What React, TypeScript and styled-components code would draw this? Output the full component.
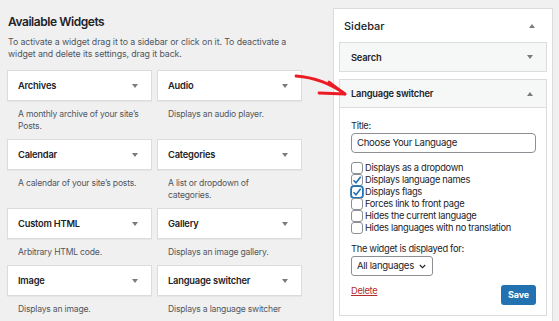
import React from 'react'
import styled, { createGlobalStyle } from 'styled-components'

const GlobalStyle = createGlobalStyle`
  html, body {
    margin: 0;
    padding: 0;
    background: #f0f0f1;
    font-family: Inter, "Noto Sans", sans-serif;
    color: #1d2327;
  }
  * { box-sizing: border-box; }
`

const Page = styled.div`
  position: relative;
  width: 559px;
  height: 321px;
  overflow: hidden;
  display: flex;
  padding: 0 6px 0 7px;
`

const LeftColumn = styled.div`
  width: 295px;
  padding-top: 14px;
`

const Heading = styled.h2`
  margin: 0;
  font-size: 12px;
  line-height: 16px;
  font-weight: 600;
  letter-spacing: -0.45px;
  padding-left: 1px;
`

const Intro = styled.p`
  margin: 6px 0 0 1px;
  font-size: 8.8px;
  line-height: 11.5px;
  letter-spacing: -0.1px;
  color: #50575e;
`

const WidgetGrid = styled.div`
  margin-top: 11px;
  display: grid;
  grid-template-columns: 145px 145px;
  column-gap: 5px;
`

const WidgetItem = styled.div``

const Card = styled.div`
  height: 31px;
  display: flex;
  align-items: center;
  justify-content: space-between;
  padding: 0 13px 0 10px;
  background: #fff;
  border: 1px solid #dcdcde;
  box-shadow: 0 1px 1px rgba(0, 0, 0, 0.04);
  font-size: 9.3px;
  font-weight: 600;
  letter-spacing: -0.2px;
`

const Desc = styled.div`
  padding: 7px 12px 7px 11px;
  font-size: 8.6px;
  line-height: 12px;
  letter-spacing: -0.2px;
  color: #50575e;
`

const Caret = styled.span<{ $up?: boolean }>`
  width: 0;
  height: 0;
  border-left: 3px solid transparent;
  border-right: 3px solid transparent;
  ${p => (p.$up ? 'border-bottom: 4px solid #787c82;' : 'border-top: 4px solid #787c82;')}
`

const SidebarBox = styled.div`
  margin: 8px 0 0 auto;
  width: 220px;
  height: 330px;
  background: #fff;
  border: 1px solid #dcdcde;
  padding: 0 5px;
`

const SidebarHeader = styled.div`
  height: 33px;
  display: flex;
  align-items: center;
  justify-content: space-between;
  padding: 0 12px 0 5px;
  font-size: 11px;
  font-weight: 500;
`

const WidgetBox = styled.div<{ $gap?: number }>`
  margin-top: ${p => p.$gap ?? 0}px;
  border: 1px solid #dcdcde;
  background: #f6f7f7;
`

const WidgetHead = styled.div<{ $h: number }>`
  height: ${p => p.$h}px;
  display: flex;
  align-items: center;
  justify-content: space-between;
  padding: 0 13px 0 11px;
  font-size: 9.3px;
  font-weight: 600;
  letter-spacing: -0.2px;
`

const WidgetBody = styled.div`
  background: #fff;
  border-top: 1px solid #dcdcde;
  padding: 12px 10px 10px 11px;
  font-size: 9.3px;
  line-height: 12px;
  letter-spacing: -0.3px;
`

const Label = styled.div``

const TextInput = styled.div`
  margin-top: 1px;
  height: 20px;
  border: 1px solid #8c8f94;
  border-radius: 4px;
  padding: 0 5px;
  display: flex;
  align-items: center;
  font-size: 9.6px;
`

const CheckList = styled.div`
  margin-top: 9px;
`

const CheckRow = styled.div`
  height: 12px;
  display: flex;
  align-items: center;
`

const Box = styled.span<{ $focus?: boolean }>`
  width: 12px;
  height: 12px;
  margin-right: 2px;
  flex: none;
  border-radius: 3px;
  border: 1px solid ${p => (p.$focus ? '#2271b1' : '#8c8f94')};
  box-shadow: ${p => (p.$focus ? '0 0 0 0.8px #2271b1' : 'none')};
  background: #fff;
  display: flex;
  align-items: center;
  justify-content: center;
`

const SectionLabel = styled.div`
  margin-top: 9px;
`

const Select = styled.div`
  margin-top: 1px;
  width: 82px;
  height: 20px;
  border: 1px solid #8c8f94;
  border-radius: 3px;
  display: flex;
  align-items: center;
  justify-content: space-between;
  padding: 0 6px 0 5px;
  font-size: 9.6px;
`

const Actions = styled.div`
  margin-top: 9px;
  display: flex;
  justify-content: space-between;
  align-items: flex-start;
`

const DeleteLink = styled.span`
  color: #b32d2e;
  text-decoration: underline;
  font-size: 9.3px;
`

const SaveButton = styled.span`
  width: 35px;
  height: 20px;
  border-radius: 3px;
  background: #2271b1;
  color: #fff;
  font-size: 9px;
  font-weight: 700;
  letter-spacing: -0.2px;
  display: flex;
  align-items: center;
  justify-content: center;
`

const Annotation = styled.svg`
  position: absolute;
  left: 0;
  top: 0;
  pointer-events: none;
`

const widgets = [
  { name: 'Archives', desc: "A monthly archive of your site\u2019s Posts." },
  { name: 'Audio', desc: 'Displays an audio player.' },
  { name: 'Calendar', desc: "A calendar of your site\u2019s posts." },
  { name: 'Categories', desc: 'A list or dropdown of categories.' },
  { name: 'Custom HTML', desc: 'Arbitrary HTML code.' },
  { name: 'Gallery', desc: 'Displays an image gallery.' },
  { name: 'Image', desc: 'Displays an image.' },
  { name: 'Language switcher', desc: 'Displays a language switcher' },
]

const options = [
  { label: 'Displays as a dropdown', checked: false },
  { label: 'Displays language names', checked: true },
  { label: 'Displays flags', checked: true, focus: true },
  { label: 'Forces link to front page', checked: false },
  { label: 'Hides the current language', checked: false },
  { label: 'Hides languages with no translation', checked: false },
]

function Check() {
  return (
    <svg width="10" height="10" viewBox="0 0 10 10">
      <path d="M1.5 5.2 L4 7.7 L8.7 1.8" fill="none" stroke="#2271b1" strokeWidth="1.6" />
    </svg>
  )
}

function App() {
  return (
    <Page>
      <GlobalStyle />
      <LeftColumn>
        <Heading>Available Widgets</Heading>
        <Intro>
          To activate a widget drag it to a sidebar or click on it. To deactivate a widget and delete its settings, drag it back.
        </Intro>
        <WidgetGrid>
          {widgets.map(w => (
            <WidgetItem key={w.name}>
              <Card>
                {w.name}
                <Caret />
              </Card>
              <Desc>{w.desc}</Desc>
            </WidgetItem>
          ))}
        </WidgetGrid>
      </LeftColumn>

      <SidebarBox>
        <SidebarHeader>
          Sidebar
          <Caret $up />
        </SidebarHeader>
        <WidgetBox>
          <WidgetHead $h={28}>
            Search
            <Caret />
          </WidgetHead>
        </WidgetBox>
        <WidgetBox $gap={7}>
          <WidgetHead $h={27}>
            Language switcher
            <Caret $up />
          </WidgetHead>
          <WidgetBody>
            <Label>Title:</Label>
            <TextInput>Choose Your Language</TextInput>
            <CheckList>
              {options.map(o => (
                <CheckRow key={o.label}>
                  <Box $focus={o.focus}>{o.checked && <Check />}</Box>
                  {o.label}
                </CheckRow>
              ))}
            </CheckList>
            <SectionLabel>The widget is displayed for:</SectionLabel>
            <Select>
              All languages
              <svg width="7" height="5" viewBox="0 0 7 5">
                <path d="M0.8 1 L3.5 3.7 L6.2 1" fill="none" stroke="#1d2327" strokeWidth="1.1" />
              </svg>
            </Select>
            <Actions>
              <DeleteLink>Delete</DeleteLink>
              <SaveButton>Save</SaveButton>
            </Actions>
          </WidgetBody>
        </WidgetBox>
      </SidebarBox>

      <Annotation width="559" height="321" viewBox="0 0 559 321">
        <g fill="none" stroke="#ec1c24" strokeWidth="2.8" strokeLinecap="round" strokeLinejoin="round">
          <path d="M296 76 Q 323 78 345 94" />
          <path d="M329 82 L345 94 L319 93" />
        </g>
      </Annotation>
    </Page>
  )
}

export default App
